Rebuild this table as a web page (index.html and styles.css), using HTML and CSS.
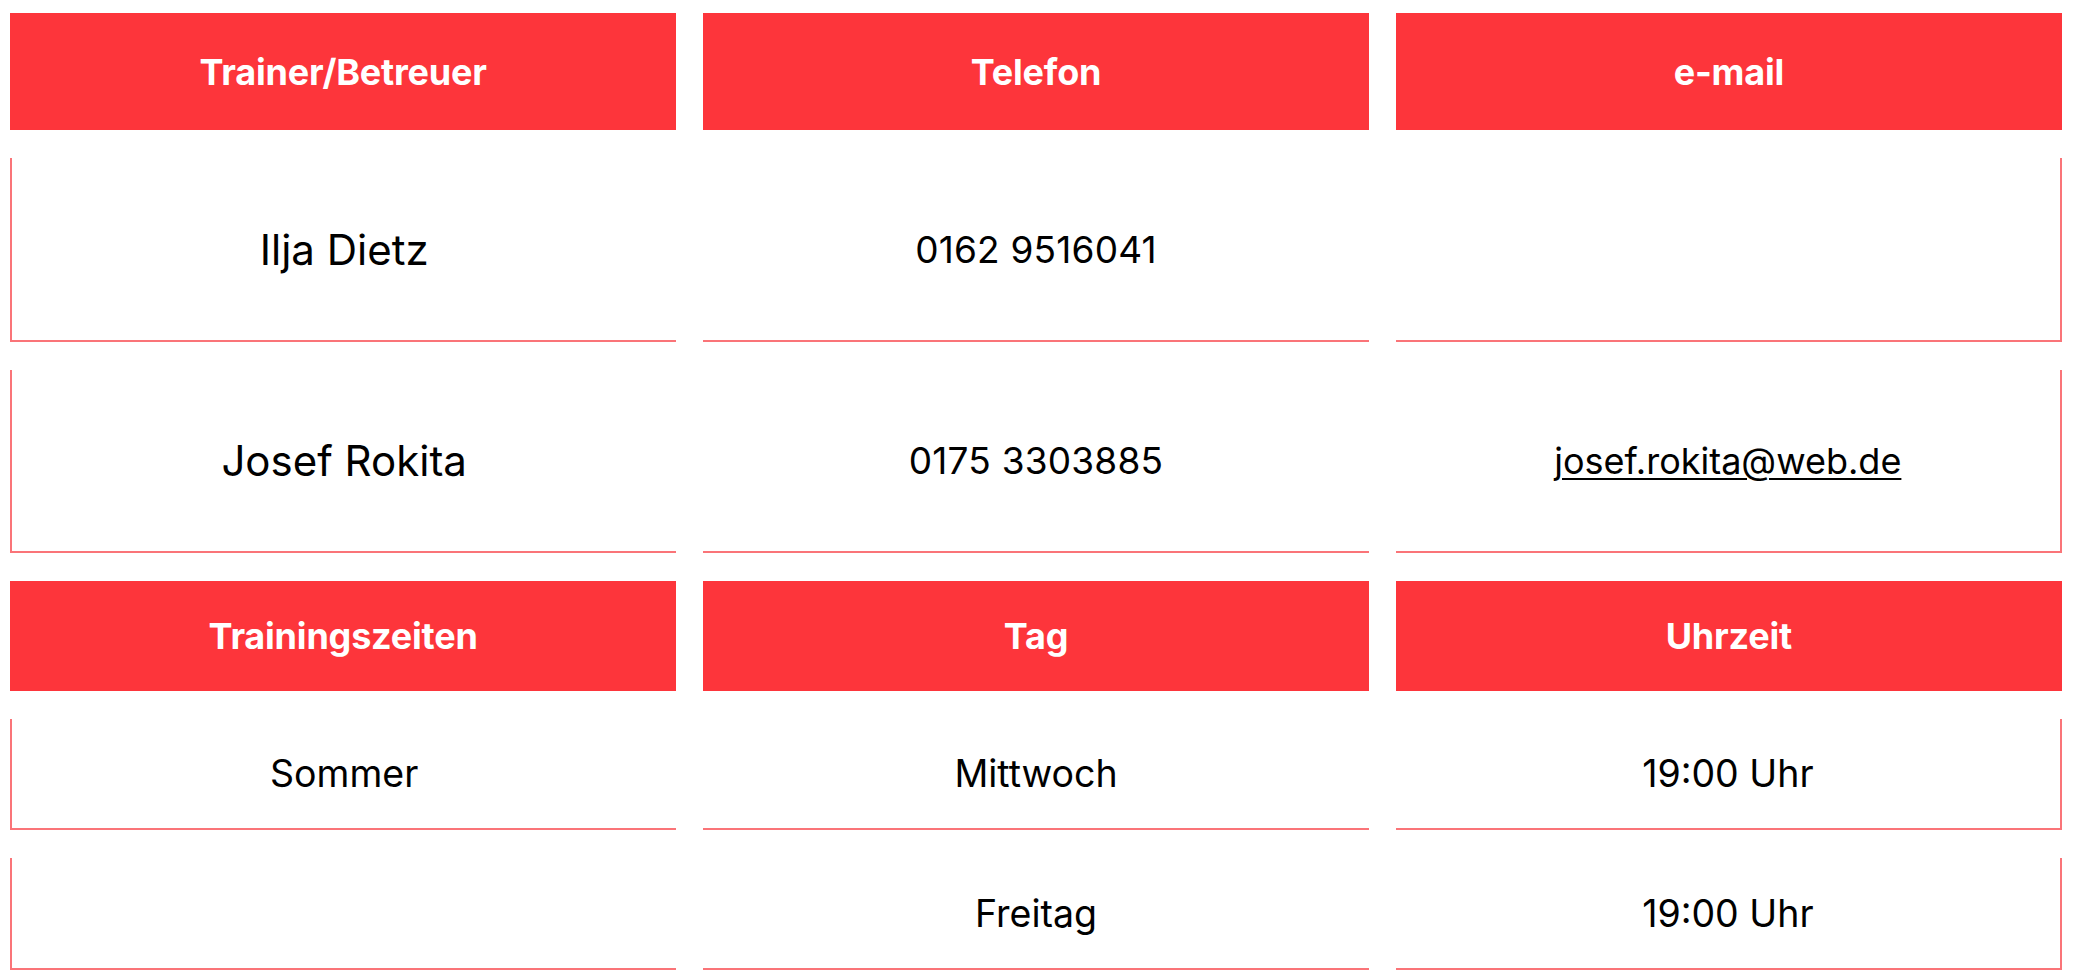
FILE: index.html
```html
<!DOCTYPE html>
<html lang="de">
<head>
<meta charset="utf-8">
<title>Trainer und Trainingszeiten</title>
<link rel="stylesheet" href="styles.css">
</head>
<body>
<div class="table">
  <div class="head">Trainer/Betreuer</div>
  <div class="head">Telefon</div>
  <div class="head">e-mail</div>

  <div class="cell first big">Ilja Dietz</div>
  <div class="cell mid phone">0162 9516041</div>
  <div class="cell last"></div>

  <div class="cell first big">Josef Rokita</div>
  <div class="cell mid phone">0175 3303885</div>
  <div class="cell last"><a class="mail" href="mailto:josef.rokita@web.de">josef.rokita@web.de</a></div>

  <div class="head">Trainingszeiten</div>
  <div class="head">Tag</div>
  <div class="head">Uhrzeit</div>

  <div class="cell first">Sommer</div>
  <div class="cell mid">Mittwoch</div>
  <div class="cell last">19:00 Uhr</div>

  <div class="cell first"></div>
  <div class="cell mid">Freitag</div>
  <div class="cell last">19:00 Uhr</div>
</div>
</body>
</html>
```

FILE: styles.css
```css
html, body {
  margin: 0;
  padding: 0;
  background: #ffffff;
}

body {
  font-family: Inter, "Noto Sans", sans-serif;
  color: #000;
}

.table {
  box-sizing: border-box;
  width: 2062px;
  padding: 13px 0 0 10px;
  display: grid;
  grid-template-columns: repeat(3, 1fr);
  grid-template-rows: 117px 184px 183px 110px 111px 112px;
  column-gap: 26.5px;
  row-gap: 28px;
}

.head {
  background: #fd353b;
  color: #fff;
  font-weight: 700;
  font-size: 36px;
  letter-spacing: -0.2px;
  display: flex;
  align-items: center;
  justify-content: center;
}

.cell {
  box-sizing: border-box;
  display: flex;
  align-items: center;
  justify-content: center;
  font-size: 37.5px;
  border-bottom: 2px solid #fa7478;
}

.cell.first {
  border-left: 2px solid #fa7478;
}

.cell.last {
  border-right: 2px solid #fa7478;
}

.cell.big {
  font-size: 42px;
}

.cell.phone {
  font-size: 37px;
  letter-spacing: 0.2px;
}

.mail {
  color: #000;
  font-size: 36px;
  text-decoration: underline;
  text-underline-offset: 4px;
  text-decoration-thickness: 2px;
}
```
